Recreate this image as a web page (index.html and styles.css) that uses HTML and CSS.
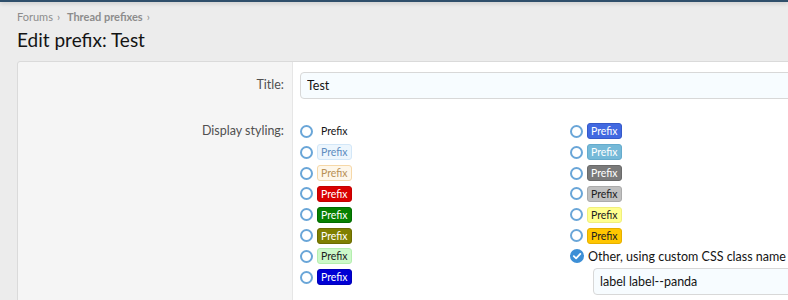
FILE: index.html
```html
<!DOCTYPE html>
<html>
<head>
  <meta charset="utf-8">
  <title>Edit prefix: Test</title>
  <link rel="stylesheet" href="styles.css">
</head>
<body>
  <div class="top-bar"></div>

  <div class="page">
    <div class="breadcrumbs">
      <a href="#">Forums</a><span class="sep">&rsaquo;</span>
      <a href="#" class="crumb-bold">Thread prefixes</a><span class="sep">&rsaquo;</span>
    </div>
    <h1>Edit prefix: Test</h1>

    <form class="block">
      <div class="form-row">
        <div class="form-label"><label for="title">Title:</label></div>
        <div class="form-input">
          <input type="text" id="title" class="input" value="Test">
        </div>
      </div>

      <div class="form-row row-styling">
        <div class="form-label"><span>Display styling:</span></div>
        <div class="form-input">
          <div class="choices">
            <ul class="choice-col">
              <li><span class="radio"></span><span class="label label--hidden">Prefix</span></li>
              <li><span class="radio"></span><span class="label label--primary">Prefix</span></li>
              <li><span class="radio"></span><span class="label label--accent">Prefix</span></li>
              <li><span class="radio"></span><span class="label label--red">Prefix</span></li>
              <li><span class="radio"></span><span class="label label--green">Prefix</span></li>
              <li><span class="radio"></span><span class="label label--olive">Prefix</span></li>
              <li><span class="radio"></span><span class="label label--lightGreen">Prefix</span></li>
              <li><span class="radio"></span><span class="label label--blue">Prefix</span></li>
            </ul>
            <ul class="choice-col">
              <li><span class="radio"></span><span class="label label--royalBlue">Prefix</span></li>
              <li><span class="radio"></span><span class="label label--skyBlue">Prefix</span></li>
              <li><span class="radio"></span><span class="label label--gray">Prefix</span></li>
              <li><span class="radio"></span><span class="label label--silver">Prefix</span></li>
              <li><span class="radio"></span><span class="label label--yellow">Prefix</span></li>
              <li><span class="radio"></span><span class="label label--orange">Prefix</span></li>
              <li>
                <span class="radio checked">
                  <svg viewBox="0 0 14 14" width="14" height="14"><circle cx="7" cy="7" r="7" fill="#3d8fd6"/><path d="M3.8 7.2 L6.1 9.4 L10.3 4.9" fill="none" stroke="#fff" stroke-width="1.8" stroke-linecap="round" stroke-linejoin="round"/></svg>
                </span>
                <span class="other-text">Other, using custom CSS class name</span>
              </li>
              <li class="dependent">
                <input type="text" class="input" value="label label--panda">
              </li>
            </ul>
          </div>
        </div>
      </div>
    </form>
  </div>
</body>
</html>
```

FILE: styles.css
```css
html, body {
  margin: 0;
  padding: 0;
}
body {
  font-family: Lato, "Noto Sans", sans-serif;
  font-size: 12px;
  color: #141414;
  background-color: #ececec;
  overflow: hidden;
}
.top-bar {
  height: 2px;
  background-color: #2f4f6b;
  box-shadow: 0 1px 4px rgba(0,0,0,0.25);
}
.page {
  padding: 0 0 0 17px;
}
.breadcrumbs {
  padding-top: 7px;
  font-size: 11px;
  line-height: 16px;
  color: #8c8c8c;
}
.breadcrumbs a {
  color: #8c8c8c;
  text-decoration: none;
}
.crumb-bold {
  font-weight: bold;
}
.sep {
  margin: 0 4px;
}
h1 {
  margin: 3px 0 0 0;
  font-size: 19px;
  font-weight: normal;
  line-height: 24px;
  color: #141414;
}
.block {
  margin-top: 9px;
  width: 1100px;
  border: 1px solid #dadada;
  border-radius: 3px;
  background: linear-gradient(to right, #f5f5f5 0, #f5f5f5 274px, #fff 274px);
}
.form-row {
  display: flex;
}
.form-label {
  width: 266px;
  flex: none;
  padding: 15px 8px 0 0;
  text-align: right;
  color: #505050;
  font-size: 12.5px;
  line-height: 16px;
  border-right: 1px solid #e6e6e6;
}
.form-input {
  flex: 1;
  padding: 10px 0 0 7px;
}
.input {
  box-sizing: border-box;
  width: 100%;
  height: 27px;
  padding: 0 6px;
  border: 1px solid #d8d8d8;
  border-radius: 4px;
  background-color: #f7fcff;
  font-family: inherit;
  font-size: 12.5px;
  color: #141414;
  outline: none;
}
.row-styling .form-label {
  padding-top: 24px;
}
.row-styling .form-input {
  padding-top: 22px;
  padding-bottom: 20px;
}
.choices {
  display: flex;
}
.choice-col {
  list-style: none;
  margin: 0;
  padding: 0;
  width: 270px;
}
.choice-col:last-child {
  width: 400px;
}
.choice-col li {
  display: flex;
  align-items: center;
  height: 20.85px;
}
.radio {
  box-sizing: border-box;
  width: 13px;
  height: 13px;
  border: 2px solid #6aa6d8;
  border-radius: 50%;
  margin-right: 4px;
  flex: none;
}
.radio.checked {
  border: none;
  width: 14px;
  height: 14px;
  margin-right: 4px;
}
.radio svg {
  display: block;
}
.label {
  display: inline-block;
  padding: 0 3px;
  border: 1px solid transparent;
  border-radius: 3px;
  font-size: 10.5px;
  line-height: 14px;
}
.label--hidden { color: #141414; padding-left: 3px; }
.label--primary { background: #edf6fd; border-color: #d3e7f8; color: #5d8dbf; }
.label--accent { background: #fef7ea; border-color: #f6d8a8; color: #b89155; }
.label--red { background: #d90000; border-color: #c40000; color: #fff; }
.label--green { background: #078000; border-color: #006b00; color: #fff; }
.label--olive { background: #7f7f00; border-color: #6b6b00; color: #fff; }
.label--lightGreen { background: #ccf8c8; border-color: #b4eeaf; color: #202020; }
.label--blue { background: #0000d4; border-color: #0000b8; color: #fff; }
.label--royalBlue { background: #4169e1; border-color: #3559c9; color: #fff; }
.label--skyBlue { background: #75b9d8; border-color: #65abcc; color: #fff; }
.label--gray { background: #7a7a7a; border-color: #6a6a6a; color: #fff; }
.label--silver { background: #c0c0c0; border-color: #ababab; color: #202020; }
.label--yellow { background: #ffff8f; border-color: #f0ef7c; color: #202020; }
.label--orange { background: #ffc600; border-color: #e6b000; color: #202020; }
.other-text {
  color: #141414;
  font-size: 12.5px;
}
.choice-col li.dependent {
  height: auto;
  padding: 1px 0 0 23px;
}
.dependent .input {
  width: 300px;
}
```
